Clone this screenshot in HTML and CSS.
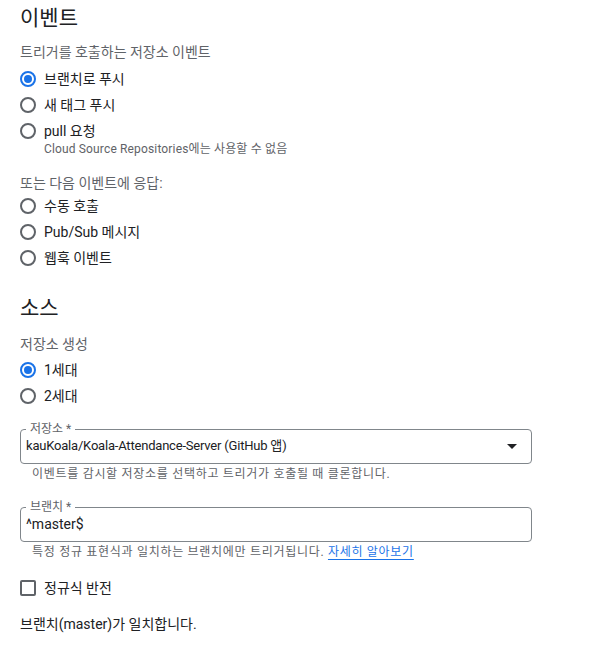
FILE: index.html
```html
<!DOCTYPE html>
<html lang="ko">
<head>
<meta charset="utf-8">
<link rel="stylesheet" href="styles.css">
</head>
<body>
<main class="page">
  <h2 class="heading heading-first">이벤트</h2>
  <div class="group-label label-trigger">트리거를 호출하는 저장소 이벤트</div>
  <div class="radio-list">
    <label class="radio-row"><span class="radio checked"></span><span class="opt">브랜치로 푸시</span></label>
    <label class="radio-row"><span class="radio"></span><span class="opt">새 태그 푸시</span></label>
    <label class="radio-row radio-row-tall"><span class="radio"></span><span class="opt-col"><span class="opt">pull 요청</span><span class="sub">Cloud Source Repositories에는 사용할 수 없음</span></span></label>
  </div>
  <div class="group-label label-or">또는 다음 이벤트에 응답:</div>
  <div class="radio-list">
    <label class="radio-row"><span class="radio"></span><span class="opt">수동 호출</span></label>
    <label class="radio-row"><span class="radio"></span><span class="opt">Pub/Sub 메시지</span></label>
    <label class="radio-row"><span class="radio"></span><span class="opt">웹훅 이벤트</span></label>
  </div>

  <h2 class="heading heading-source">소스</h2>
  <div class="group-label label-gen">저장소 생성</div>
  <div class="radio-list">
    <label class="radio-row"><span class="radio checked"></span><span class="opt">1세대</span></label>
    <label class="radio-row"><span class="radio"></span><span class="opt">2세대</span></label>
  </div>

  <fieldset class="field field-repo">
    <legend class="field-label">저장소 *</legend>
    <div class="field-value">
      <span class="repo-text">kauKoala/Koala-Attendance-Server (GitHub 앱)</span>
      <svg class="caret" width="10" height="5" viewBox="0 0 10 5"><path d="M0 0h10L5 5z" fill="#202124"/></svg>
    </div>
  </fieldset>
  <div class="hint">이벤트를 감시할 저장소를 선택하고 트리거가 호출될 때 클론합니다.</div>

  <fieldset class="field field-branch">
    <legend class="field-label">브랜치 *</legend>
    <div class="field-value"><span>^master$</span></div>
  </fieldset>
  <div class="hint">특정 정규 표현식과 일치하는 브랜치에만 트리거됩니다. <a class="link" href="#">자세히 알아보기</a></div>

  <label class="check-row"><span class="checkbox"></span><span class="opt">정규식 반전</span></label>

  <p class="result">브랜치(master)가 일치합니다.</p>
</main>
</body>
</html>
```
FILE: styles.css
```css
html, body {
  margin: 0;
  padding: 0;
  background: #ffffff;
}
body {
  font-family: Roboto, "Noto Sans CJK KR", sans-serif;
  font-size: 14px;
  color: #202124;
}
.page {
  padding: 4px 20px 0 20px;
  width: 512px;
}
.heading {
  margin: 0;
  font-size: 21px;
  font-weight: 400;
  line-height: 28px;
  height: 28px;
  color: #202124;
}
.heading-source {
  margin-top: 23px;
}
.group-label {
  color: #5f6368;
  line-height: 20px;
  height: 20px;
}
.label-trigger { margin-top: 10px; }
.label-or { margin-top: 15px; }
.label-gen { margin-top: 12px; }
.radio-list {
  display: flex;
  flex-direction: column;
}
.label-trigger + .radio-list { margin-top: 4px; }
.label-gen + .radio-list { margin-top: 3px; }
.radio-row {
  display: flex;
  align-items: center;
  height: 26px;
  gap: 8px;
}
.radio-row-tall {
  align-items: flex-start;
  height: 40px;
  padding-top: 3px;
  box-sizing: border-box;
}
.radio-row-tall .radio { margin-top: 2px; }
.opt-col {
  display: flex;
  flex-direction: column;
}
.opt {
  line-height: 20px;
}
.sub {
  font-size: 12px;
  line-height: 16px;
  color: #5f6368;
  letter-spacing: 0.15px;
}
.radio {
  box-sizing: border-box;
  width: 16px;
  height: 16px;
  border: 2px solid #5f6368;
  border-radius: 50%;
  display: flex;
  align-items: center;
  justify-content: center;
  flex: none;
}
.radio.checked {
  border-color: #1a73e8;
}
.radio.checked::after {
  content: "";
  width: 8px;
  height: 8px;
  border-radius: 50%;
  background: #1a73e8;
}
.field {
  margin: 13px 0 0 0;
  padding: 0 14px 7px 5px;
  border: 1px solid #80868b;
  border-radius: 4px;
  min-width: 0;
}
.field-branch { margin-top: 18px; }
.field-label {
  font-size: 12px;
  line-height: 14px;
  padding: 0 4px;
  color: #5f6368;
}
.field-value {
  display: flex;
  align-items: center;
  justify-content: space-between;
  line-height: 20px;
  height: 20px;
}
.repo-text {
  font-size: 13px;
  letter-spacing: -0.2px;
}
.caret { flex: none; }
.hint {
  font-size: 12px;
  line-height: 16px;
  color: #5f6368;
  padding-left: 12px;
  margin-top: 2px;
  letter-spacing: 0.7px;
}
.link {
  color: #1a73e8;
  text-decoration: underline;
  text-underline-offset: 3px;
}
.check-row {
  display: flex;
  align-items: center;
  gap: 8px;
  height: 26px;
  margin-top: 15px;
}
.checkbox {
  box-sizing: border-box;
  width: 16px;
  height: 16px;
  border: 2px solid #5f6368;
  border-radius: 2px;
  flex: none;
}
.result {
  margin: 13px 0 0 0;
  line-height: 20px;
}
```
